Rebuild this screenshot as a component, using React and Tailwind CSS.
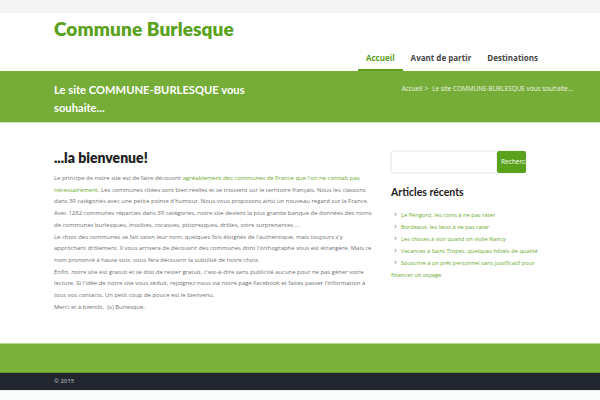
import { ChevronRight } from "lucide-react";

const articles = [
  "Le Périgord, les coins à ne pas rater",
  "Bordeaux, les lieux à ne pas rater",
  "Les choses à voir quand on visite Nancy",
  "Vacances à Saint Tropez, quelques hôtels de qualité",
  "Souscrire à un prêt personnel sans justificatif pour financer un voyage",
];

const App = () => {
  return (
    <div className="w-[600px] h-[400px] overflow-hidden bg-white font-['Open_Sans',sans-serif]">
      {/* bande du haut */}
      <div className="h-[13px] bg-[#f4f5f4]" />

      {/* en-tête */}
      <header className="h-[58px] px-[54px] flex justify-between">
        <h1 className="pt-[3px] text-[19px] leading-[26px] font-extrabold text-[#5aa11c] font-['Lato',sans-serif] tracking-[0.1px]">
          Commune Burlesque
        </h1>
        <nav className="flex items-end text-[8px] font-bold text-[#444]">
          <a className="px-[8px] pb-[5px] text-[#5aa11c] border-b-2 border-[#5aa11c]">Accueil</a>
          <a className="px-[8px] pb-[5px] border-b-2 border-transparent">Avant de partir</a>
          <a className="px-[8px] pb-[5px] border-b-2 border-transparent">Destinations</a>
        </nav>
      </header>

      {/* bannière verte */}
      <div className="h-[52px] bg-[#76ad39] border-b border-[#cfe3b4] pl-[54px] pr-[27px] flex justify-between items-start pt-[10px]">
        <h2 className="w-[215px] text-[11.2px] leading-[18px] font-bold text-white font-['Lato',sans-serif]">
          Le site COMMUNE-BURLESQUE vous souhaite...
        </h2>
        <div className="pt-[3px] text-[6.4px] text-[#eef6e4] flex items-center gap-[2px]">
          <span>Accueil</span>
          <span>&gt;</span>
          <span className="ml-[2px]">Le site COMMUNE-BURLESQUE vous souhaite...</span>
        </div>
      </div>

      {/* contenu */}
      <main className="px-[54px] pt-[26px] flex justify-between h-[220px]">
        <article className="w-[322px]">
          <h3 className="text-[14px] leading-[18px] font-extrabold text-[#222] font-['Lato',sans-serif] mb-[6px]">
            ...la bienvenue!
          </h3>
          <div className="text-[5.95px] leading-[11.5px] text-[#707070] space-y-[0.5px]">
            <p>
              Le principe de notre site est de faire découvrir{" "}
              <span className="text-[#6aaa2a]">
                agréablement des communes de France que l'on ne connaît pas nécessairement
              </span>
              . Les communes citées sont bien réelles et se trouvent sur le territoire français. Nous les classons
              dans 39 catégories avec une petite pointe d'humour. Nous vous proposons ainsi un nouveau regard sur la France.
            </p>
            <p>
              Avec 1282 communes réparties dans 39 catégories, notre site devient la plus grande banque de données des noms
              de communes burlesques, insolites, cocasses, pittoresques, drôles, voire surprenantes ...
            </p>
            <p>
              Le choix des communes se fait selon leur nom, quelques fois éloignés de l'authentique, mais toujours s'y
              approchant drôlement. Il vous arrivera de découvrir des communes dont l'orthographe vous est étrangère. Mais ce
              nom prononcé à haute voix, vous fera découvrir la subtilité de notre choix.
            </p>
            <p>
              Enfin, notre site est gratuit et se doit de rester gratuit, c'est-à-dire sans publicité aucune pour ne pas gêner votre
              lecture. Si l'idée de notre site vous séduit, rejoignez-nous via notre page Facebook et faites passer l'information à
              tous vos contacts. Un petit coup de pouce est le bienvenu.
            </p>
            <p>Merci et à bientôt, &nbsp;(s) Burlesque.</p>
          </div>
        </article>

        <aside className="w-[155px] pt-[2px]">
          <div className="flex w-[135px] h-[22px] shadow-[0_0_2px_rgba(0,0,0,0.15)] rounded-[2px]">
            <input className="flex-1 min-w-0 bg-white border border-[#eee] rounded-l-[2px] outline-none" />
            <button className="w-[29px] bg-[#5aa11c] text-white text-[6.5px] overflow-hidden whitespace-nowrap rounded-[2px] pl-[4px] text-left">
              Recherche
            </button>
          </div>
          <h4 className="mt-[12px] text-[10.5px] font-bold text-[#222] font-['Lato',sans-serif]">Articles récents</h4>
          <ul className="mt-[8px] text-[5.7px] leading-[12px] text-[#6aaa2a]">
            {articles.map((a) => (
              <li key={a}>
                <ChevronRight className="inline w-[5px] h-[5px] text-[#555] mr-[3px] ml-[2px] align-[-0.5px]" strokeWidth={3} />
                {a}
              </li>
            ))}
          </ul>
        </aside>
      </main>

      {/* pied de page */}
      <footer>
        <div className="h-[30px] bg-[#79b13b] border-t border-[#b9d98f] border-b border-b-[#5f9a24]" />
        <div className="h-[17px] bg-[#22272f] px-[54px] flex items-center text-[6px] text-[#c6c9cc]">© 2015</div>
        <div className="h-[10px] bg-[#fbfcfc] border-t border-[#e4ecef]" />
      </footer>
    </div>
  );
};

export default App;
